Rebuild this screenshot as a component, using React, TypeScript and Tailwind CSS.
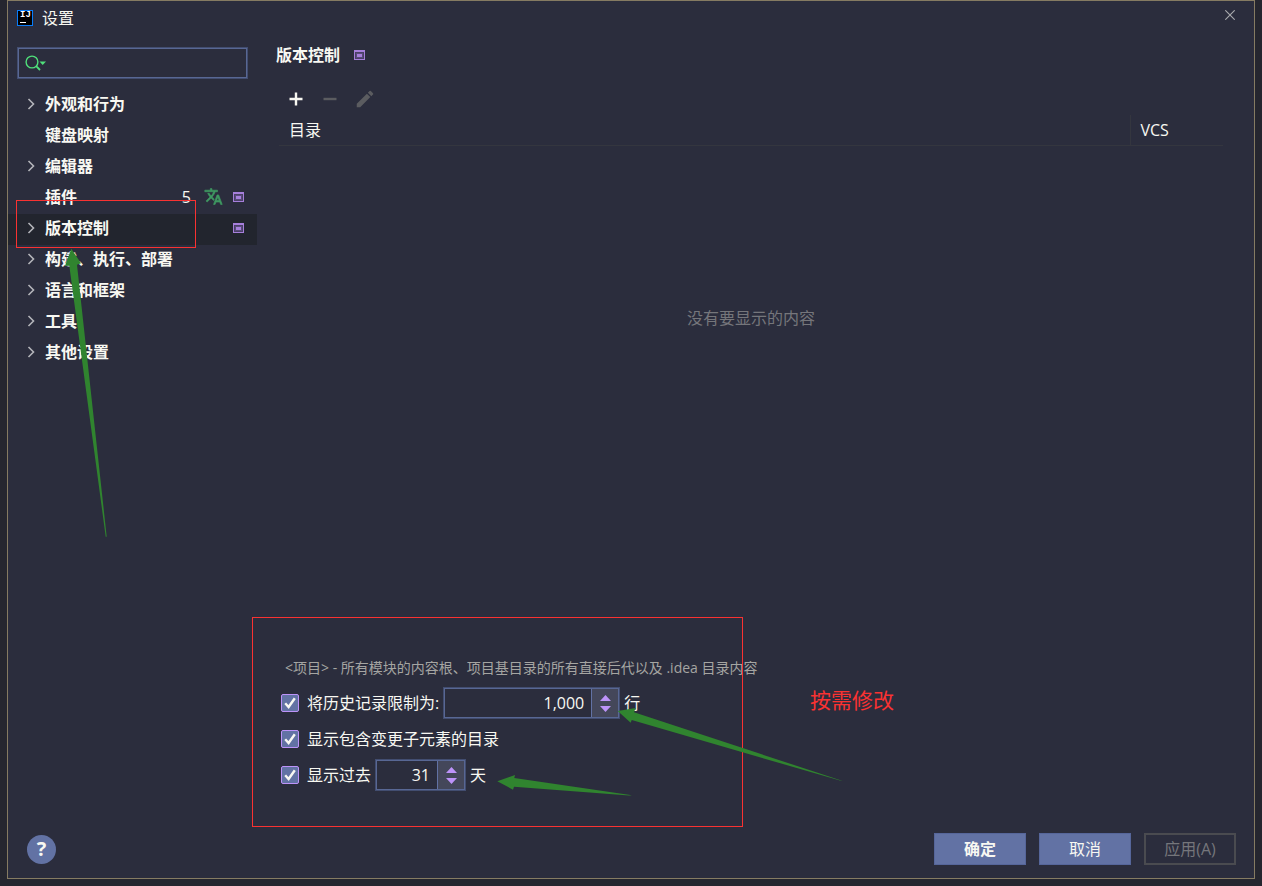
import { useState } from "react";
import { MdEdit } from "react-icons/md";

type TreeItem = {
  label: string;
  expandable: boolean;
  count?: number;
  translate?: boolean;
  project?: boolean;
};

const items: TreeItem[] = [
  { label: "外观和行为", expandable: true },
  { label: "键盘映射", expandable: false },
  { label: "编辑器", expandable: true },
  { label: "插件", expandable: false, count: 5, translate: true, project: true },
  { label: "版本控制", expandable: true, project: true },
  { label: "构建、执行、部署", expandable: true },
  { label: "语言和框架", expandable: true },
  { label: "工具", expandable: true },
  { label: "其他设置", expandable: true },
];

function ProjectIcon() {
  return (
    <svg width="11" height="10" viewBox="0 0 11 10" shapeRendering="crispEdges">
      <rect width="11" height="10" fill="#a67fdb" />
      <rect x="1" y="2" width="9" height="7" fill="#4a3f66" />
      <rect x="2" y="3" width="7" height="5" fill="#594b7b" />
      <rect x="3" y="4" width="5" height="3" fill="#a67fdb" />
    </svg>
  );
}

function TranslateIcon() {
  return (
    <svg width="19" height="19" viewBox="0 0 24 24" fill="#3f9a62" stroke="#3f9a62" strokeWidth="0.8">
      <path d="M12.87 15.07l-2.54-2.51.03-.03A17.52 17.52 0 0014.07 6H17V4h-7V2H8v2H1v1.99h11.17C11.5 7.92 10.44 9.75 9 11.35 8.07 10.32 7.3 9.19 6.69 8h-2c.73 1.63 1.73 3.17 2.98 4.56l-5.09 5.02L4 19l5-5 3.11 3.11.76-2.04zM18.5 10h-2L12 22h2l1.12-3h4.75L21 22h2l-4.5-12zm-2.62 7l1.62-4.33L19.12 17h-3.24z" />
    </svg>
  );
}

function Chevron() {
  return (
    <svg width="12" height="12" viewBox="0 0 12 12" fill="none" stroke="#b4b5ba" strokeWidth="1.6">
      <path d="M3.5 1L8.5 6L3.5 11" />
    </svg>
  );
}

type CheckProps = {
  id: string;
  label: string;
};

function Check({ id, label }: CheckProps) {
  return (
    <div className="flex items-center gap-2">
      <span className="grid">
        <input
          id={id}
          type="checkbox"
          defaultChecked
          className="peer col-start-1 row-start-1 size-[18px] appearance-none rounded-[2px] border border-[#bd93f9] bg-[#6272a4]"
        />
        <svg
          className="pointer-events-none invisible col-start-1 row-start-1 peer-checked:visible"
          width="18"
          height="18"
          viewBox="0 0 18 18"
          fill="none"
          stroke="#f8f8f2"
          strokeWidth="2.4"
        >
          <path d="M4.2 9.2L7.6 13L13.8 4.2" />
        </svg>
      </span>
      <label htmlFor={id}>{label}</label>
    </div>
  );
}

type SpinnerProps = {
  name: string;
  initial: number;
  wide?: boolean;
};

function Spinner({ name, initial, wide }: SpinnerProps) {
  const [value, setValue] = useState(initial);

  return (
    <div className="flex h-8 border border-[#424d70] p-px ring-1 ring-inset ring-[#586794]">
      <input
        aria-label={name}
        value={value.toLocaleString("en-US")}
        onChange={(e) => setValue(Number(e.target.value.replace(/\D/g, "")))}
        className={`${wide ? "w-[146px]" : "w-[60px]"} bg-transparent pr-[7px] text-right outline-none`}
      />
      <div className="flex w-[27px] flex-col items-center justify-center gap-[5px] border-l border-[#6272a4] bg-[#44475a]">
        <button aria-label="增加" onClick={() => setValue(value + 1)}>
          <svg className="block" width="11" height="6" viewBox="0 0 11 6" fill="#bd93f9">
            <path d="M0 6L5.5 0L11 6Z" />
          </svg>
        </button>
        <button aria-label="减少" onClick={() => setValue(Math.max(0, value - 1))}>
          <svg className="block" width="11" height="6" viewBox="0 0 11 6" fill="#bd93f9">
            <path d="M0 0L11 0L5.5 6Z" />
          </svg>
        </button>
      </div>
    </div>
  );
}

export default function App() {
  const [selected, setSelected] = useState("版本控制");
  const [query, setQuery] = useState("");

  return (
    <div className="flex min-h-screen bg-[#25262f] px-[7px] pb-[7px] font-['Open_Sans','Noto_Sans_CJK_SC',sans-serif] text-[16px] leading-6 text-[#f8f8f2]">
      <div className="relative flex flex-1 flex-col border border-[#857b62] bg-[#2b2d3d]">

        <header className="flex h-[34px] items-start justify-between pl-[9px]">
          <div className="flex h-full items-center gap-[9px]">
            <div className="flex size-4 flex-col border border-[#087cfa] bg-black pl-[2px]">
              <span className="font-['Liberation_Mono',monospace] text-[9px] font-bold leading-[9px] text-white">IJ</span>
              <span className="mt-[2px] h-px w-[6px] bg-white" />
            </div>
            <h1>设置</h1>
          </div>
          <button aria-label="关闭" className="flex h-7 w-12 items-center justify-center">
            <svg width="10" height="10" viewBox="0 0 10 10" stroke="#a9aaae" strokeWidth="1.1">
              <path d="M0.3 0.3L9.7 9.7M9.7 0.3L0.3 9.7" />
            </svg>
          </button>
        </header>

        <div className="flex flex-1">
          <aside className="w-[249px] shrink-0 pt-3">
            <div className="mx-[9px] flex h-8 items-center gap-1 border border-[#424d70] p-px pl-[7px] ring-1 ring-inset ring-[#586794]">
              <svg width="22" height="16" viewBox="0 0 22 16" fill="none" stroke="#4fe07a" strokeWidth="1.4">
                <circle cx="7" cy="7" r="5.9" />
                <path d="M11.2 11.2L15 15" strokeWidth="1.8" />
                <path d="M14.5 6.5H21L17.7 10Z" fill="#4fe07a" stroke="none" />
              </svg>
              <input
                aria-label="搜索"
                value={query}
                onChange={(e) => setQuery(e.target.value)}
                className="min-w-0 flex-1 bg-transparent outline-none"
              />
            </div>

            <nav className="mt-[11px]">
              {items.map((item) => (
                <button
                  key={item.label}
                  onClick={() => setSelected(item.label)}
                  className={`flex h-[31px] w-full items-center pr-[13px] pl-[17px] pb-1 font-bold ${selected === item.label ? "bg-[#22252e]" : ""}`}
                >
                  <span className="mr-2 w-3">{item.expandable && <Chevron />}</span>
                  <span className="flex-1 text-left">{item.label}</span>
                  {item.count && <span className="mr-[13px] font-normal">{item.count}</span>}
                  <span className="flex items-center gap-[10px]">
                    {item.translate && <TranslateIcon />}
                    {item.project && <ProjectIcon />}
                  </span>
                </button>
              ))}
            </nav>
          </aside>

          <main className="flex min-w-0 flex-1 flex-col pt-2">
            <div className="flex items-center gap-[14px] pl-[19px]">
              <h2 className="font-bold">版本控制</h2>
              <ProjectIcon />
            </div>

            <div className="mt-4 flex h-8 pl-[22px]">
              <button aria-label="添加" className="flex w-[34px] items-center justify-center">
                <svg width="14" height="14" viewBox="0 0 14 14" stroke="#f8f8f2" strokeWidth="2.4">
                  <path d="M7 0.5V13.5M0.5 7H13.5" />
                </svg>
              </button>
              <button aria-label="移除" disabled className="flex w-[34px] items-center justify-center">
                <svg width="14" height="14" viewBox="0 0 14 14" stroke="#5b5c60" strokeWidth="2.4">
                  <path d="M0.5 7H13.5" />
                </svg>
              </button>
              <button aria-label="编辑" disabled className="flex w-[36px] items-center justify-center">
                <MdEdit className="size-[22px] text-[#5b5c60]" />
              </button>
            </div>

            <div className="pr-[31px] pl-[22px]">
              <table className="w-full">
                <thead>
                  <tr className="h-[30px] border-b border-[#34363f] text-left">
                    <th className="pl-[10px] font-normal">目录</th>
                    <th className="w-[93px] border-l border-[#34363f] pl-[10px] font-normal">VCS</th>
                  </tr>
                </thead>
                <tbody>
                  <tr>
                    <td colSpan={2} className="h-[346px] text-center text-[#75767b]">没有要显示的内容</td>
                  </tr>
                </tbody>
              </table>
            </div>

            <section className="relative mt-auto pl-6">
              <p className="ml-1 text-[14px] leading-[22px] text-[#a5a5a2]">
                &lt;项目&gt; - 所有模块的内容根、项目基目录的所有直接后代以及 .idea 目录内容
              </p>
              <div className="mt-2 flex flex-col gap-1">
                <div className="flex h-8 items-center gap-1">
                  <Check id="limit-history" label="将历史记录限制为:" />
                  <Spinner name="行数" initial={1000} wide />
                  <span>行</span>
                </div>
                <div className="flex h-8 items-center">
                  <Check id="show-changed" label="显示包含变更子元素的目录" />
                </div>
                <div className="flex h-8 items-center gap-1">
                  <Check id="show-last" label="显示过去" />
                  <Spinner name="天数" initial={31} />
                  <span>天</span>
                </div>
              </div>

              {/* notes drawn over the options */}
              <div className="pointer-events-none absolute -top-10 -left-[5px] h-[210px] w-[491px] border border-[#f93232]" />
              <p className="absolute top-[27px] left-[553px] text-[21px] leading-8 text-[#f93232]">按需修改</p>
              <svg
                className="pointer-events-none absolute top-[50px] left-[360px]"
                width="226"
                height="75"
                viewBox="0 0 226 75"
                fill="#30842f"
              >
                <path d="M0.7 4L18.7 1L17 5.3L225.7 74L223 73.6L14.7 13L13.7 15.7Z" />
              </svg>
              <svg
                className="pointer-events-none absolute top-[117px] left-60"
                width="136"
                height="23"
                viewBox="0 0 136 23"
                fill="#30842f"
              >
                <path d="M0.3 7.3L18 1L17.3 4L135 21.3L132 21.6L17 12.7L16 15.7Z" />
              </svg>
            </section>
          </main>
        </div>

        <footer className="flex items-center justify-between pt-[42px] pr-[18px] pb-[13px] pl-[19px]">
          <button aria-label="帮助" className="size-[29px] rounded-full bg-[#6272a4] text-[20px] font-bold">
            ?
          </button>
          <div className="flex gap-[13px]">
            <button className="h-8 w-[92px] border border-[#56669a] bg-[#6272a4] font-bold">确定</button>
            <button className="h-8 w-[92px] border border-[#56669a] bg-[#6272a4]">取消</button>
            <button disabled className="h-8 w-[92px] border-2 border-[#4a4b50] text-[#75767b]">应用(A)</button>
          </div>
        </footer>

        {/* notes drawn over the tree */}
        <div className="pointer-events-none absolute top-[199px] left-2 h-12 w-[180px] border border-[#f93232]" />
        <svg
          className="pointer-events-none absolute top-[247px] left-14"
          width="44"
          height="290"
          viewBox="0 0 44 290"
          fill="#30842f"
        >
          <path d="M7.3 0.7L17 15.3L13 16.7L42.7 288.7H41.7L5.3 17.7L1 18Z" />
        </svg>
      </div>
    </div>
  );
}
